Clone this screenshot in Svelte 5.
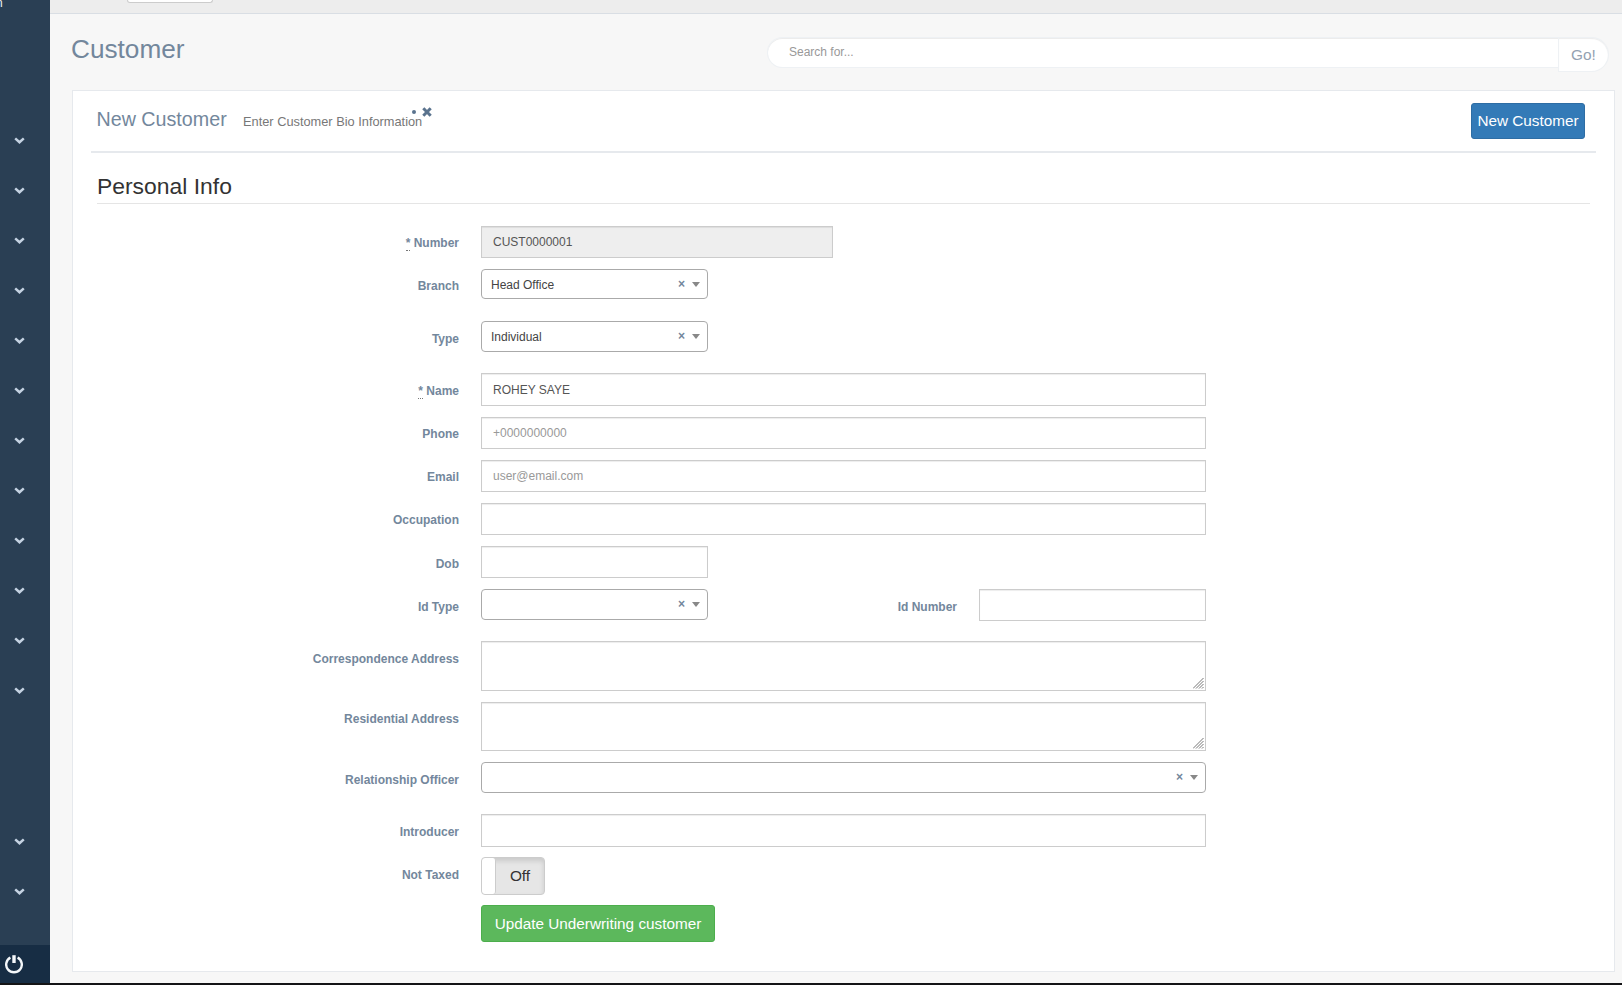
<script>
	// height / gap are the control height and the space under the row, pad lowers the label
	const rows = [
		{ label: 'Number', required: true, type: 'text', size: 'mid', value: 'CUST0000001', readonly: true, height: 32, gap: 11, pad: 10 },
		{ label: 'Branch', type: 'select', size: 'small', value: 'Head Office', height: 30, gap: 22, pad: 10 },
		{ label: 'Type', type: 'select', size: 'small', value: 'Individual', height: 31, gap: 21, pad: 11 },
		{ label: 'Name', required: true, type: 'text', size: 'full', value: 'ROHEY SAYE', height: 33, gap: 11, pad: 11 },
		{ label: 'Phone', type: 'text', size: 'full', placeholder: '+0000000000', height: 32, gap: 11, pad: 10 },
		{ label: 'Email', type: 'text', size: 'full', placeholder: 'user@email.com', height: 32, gap: 11, pad: 10 },
		{ label: 'Occupation', type: 'text', size: 'full', height: 32, gap: 11, pad: 10 },
		{ label: 'Dob', type: 'text', size: 'small', height: 32, gap: 11, pad: 11 },
		{ label: 'Id Type', type: 'select', size: 'small', height: 31, gap: 21, pad: 11, extra: 'Id Number' },
		{ label: 'Correspondence Address', type: 'area', size: 'full', height: 50, gap: 11, pad: 11 },
		{ label: 'Residential Address', type: 'area', size: 'full', height: 49, gap: 11, pad: 10 },
		{ label: 'Relationship Officer', type: 'select', size: 'full', height: 31, gap: 21, pad: 11 },
		{ label: 'Introducer', type: 'text', size: 'full', height: 33, gap: 10, pad: 11 },
		{ label: 'Not Taxed', type: 'toggle', size: 'small', height: 38, gap: 10, pad: 11 }
	];
	const menu = Array(12);
	const lowerMenu = Array(2);

	let taxed = $state(false);
</script>

{#snippet chevron()}
	<a class="item" href="#menu" aria-label="Expand">
		<svg width="11" height="8" viewBox="0 0 11 8"><path d="M1.2 1.4 L5.5 5.3 L9.8 1.4" fill="none" stroke="#c4d2e2" stroke-width="2.5" /></svg>
	</a>
{/snippet}

<div class="page">
	<aside>
		<div class="profile">n</div>
		<nav>
			{#each menu as _}
				{@render chevron()}
			{/each}
		</nav>
		<nav class="lower">
			{#each lowerMenu as _}
				{@render chevron()}
			{/each}
		</nav>
		<div class="logout">
			<svg width="18" height="19" viewBox="0 0 18 19" fill="none" stroke="#f4f7fa">
				<path d="M5.4 2.6 A7.8 7.8 0 1 0 12.6 2.6" stroke-width="2.4" />
				<path d="M9 0.2 V8" stroke-width="3.4" />
			</svg>
		</div>
	</aside>

	<main>
		<header><div class="tab"></div></header>
		<div class="title">
			<h3>Customer</h3>
			<div class="search">
				<input type="text" placeholder="Search for..." />
				<button>Go!</button>
			</div>
		</div>

		<section class="panel">
			<div class="panel-head">
				<h2>New Customer</h2>
				<small>Enter Customer Bio Information</small>
				<div class="tools">
					<i></i>
					<svg width="10" height="10" viewBox="0 0 10 10"><path d="M1.3 1.3 L8.7 8.7 M8.7 1.3 L1.3 8.7" stroke="#5a738e" stroke-width="3" /></svg>
				</div>
				<button class="btn primary">New Customer</button>
			</div>

			<form>
				<h4>Personal Info</h4>
				{#each rows as row}
					<div class="row" style:height="{row.height}px" style:margin-bottom="{row.gap}px">
						<label for={row.label} style:padding-top="{row.pad}px">
							{#if row.required}<abbr title="required">*</abbr>{/if}
							{row.label}
						</label>
						{#if row.type == 'select'}
							<div class="select {row.size}" id={row.label}>
								<span>{row.value ?? ''}</span>
								<b>×</b>
								<em></em>
							</div>
						{:else if row.type == 'area'}
							<div class="area {row.size}">
								<textarea class="control" id={row.label}></textarea>
								<svg class="grip" width="11" height="11" viewBox="0 0 11 11">
									<path d="M0 10.5 L10.5 0 M3 10.5 L10.5 3 M6 10.5 L10.5 6 M9 10.5 L10.5 9" stroke="#777" stroke-width="1" />
								</svg>
							</div>
						{:else if row.type == 'toggle'}
							<button type="button" class="toggle" id={row.label} onclick={() => (taxed = !taxed)}>
								<i></i>
								<span>{taxed ? 'On' : 'Off'}</span>
							</button>
						{:else}
							<input class="control {row.size}" id={row.label} type="text" value={row.value ?? ''} placeholder={row.placeholder} readonly={row.readonly} />
						{/if}
						{#if row.extra}
							<label class="second" for={row.extra} style:padding-top="{row.pad}px">{row.extra}</label>
							<input class="control small extra" id={row.extra} type="text" />
						{/if}
					</div>
				{/each}
				<button type="button" class="btn success">Update Underwriting customer</button>
			</form>
		</section>
	</main>
</div>

<style>
	:global(body) {
		margin: 0;
		background: #141416;
	}
	* {
		box-sizing: border-box;
	}
	.page {
		display: flex;
		height: 983px;
		overflow: hidden;
		background: #f7f7f7;
		color: #73879c;
		font-family: "Liberation Sans", Arial, sans-serif;
		font-size: 12px;
		line-height: 14px;
	}
	input, textarea, button {
		font-family: inherit;
		margin: 0;
	}

	aside {
		display: flex;
		flex-direction: column;
		width: 50px;
		background: #2a3f54;
		overflow: hidden;
	}
	.profile {
		height: 116px;
		margin: -4px 0 0 -4px;
		color: #ecf0f1;
		flex: none;
	}
	nav {
		display: flex;
		flex-direction: column;
	}
	.lower {
		margin-top: 101px;
	}
	.item {
		display: flex;
		align-items: center;
		height: 50px;
		padding: 8px 0 0 14px;
	}
	.logout {
		margin-top: auto;
		height: 38px;
		padding: 10px 0 0 5px;
		background: #172d44;
	}

	main {
		flex: 1;
	}
	header {
		height: 14px;
		background: #ededed;
		border-bottom: 1px solid #d9dee4;
	}
	.tab {
		width: 86px;
		height: 3px;
		margin-left: 77px;
		background: #fff;
		border: 1px solid #ccc;
		border-top: 0;
		border-radius: 0 0 4px 4px;
	}
	.title {
		display: flex;
		justify-content: space-between;
		height: 76px;
		padding: 23px 13px 0 22px;
	}
	h3 {
		margin: -3px 0 0 -1px;
		font-size: 26.2px;
		line-height: 30px;
		font-weight: 400;
	}
	.search {
		display: flex;
		align-items: flex-start;
		width: 842px;
	}
	.search input {
		flex: 1;
		height: 31px;
		padding: 0 21px 2px;
		border: 1px solid rgba(221, 226, 232, 0.49);
		border-right: 0;
		border-radius: 27px 0 0 27px;
		box-shadow: inset 0 1px 0 rgba(0, 0, 0, 0.075);
		font-size: 12px;
		outline: none;
	}
	.search button {
		width: 51px;
		height: 35px;
		padding: 0;
		border: 1px solid rgba(221, 226, 232, 0.49);
		border-radius: 0 27px 27px 0;
		box-shadow: inset 0 1px 1px rgba(0, 0, 0, 0.075);
		background: #fff;
		color: #93a2b2;
		font-size: 15.4px;
	}
	::placeholder {
		color: #999;
		opacity: 1;
	}

	.panel {
		width: 1543px;
		height: 882px;
		margin-left: 22px;
		padding: 0 18px;
		background: #fff;
		border: 1px solid #e6e9ed;
	}
	.panel-head {
		display: flex;
		align-items: flex-start;
		height: 62px;
		padding: 12px 11px 0 5px;
		border-bottom: 2px solid #e6e9ed;
	}
	h2 {
		width: 131px;
		margin: 4px 0 0;
		padding-left: 0.5px;
		font-size: 19.7px;
		line-height: 24px;
		font-weight: 400;
		white-space: nowrap;
	}
	small {
		width: 179px;
		margin: 12px 0 0 16px;
		color: #777;
		font-size: 12.8px;
		white-space: nowrap;
	}
	.tools {
		display: flex;
		gap: 6px;
		margin: 4px 0 0 -10px;
	}
	.tools i {
		width: 4px;
		height: 4px;
		margin-top: 3px;
		border-radius: 2px;
		background: #5a738e;
	}
	.btn {
		border: 1px solid;
		border-radius: 3px;
		color: #fff;
		font-size: 15.3px;
	}
	.primary {
		width: 114px;
		height: 36px;
		margin-left: auto;
		padding: 0;
		background: #337ab7;
		border-color: #2e6da4;
	}
	.success {
		display: block;
		width: 234px;
		height: 37px;
		margin-left: 384px;
		padding: 0;
		background: #5cb85c;
		border-color: #4cae4c;
	}

	form {
		padding: 20px 6px 0;
	}
	h4 {
		height: 31px;
		margin: 0 0 22px;
		border-bottom: 1px solid #e5e5e5;
		color: #333;
		font-size: 22.9px;
		line-height: 27px;
		font-weight: 400;
	}
	.row {
		display: flex;
		align-items: flex-start;
	}
	label {
		width: 362px;
		margin-right: 22px;
		text-align: right;
		font-weight: 700;
		white-space: nowrap;
	}
	.second {
		width: 249px;
	}
	abbr {
		text-decoration: none;
		border-bottom: 1px dotted #777;
	}
	.control {
		height: 100%;
		padding: 0 11px;
		border: 1px solid #ccc;
		border-radius: 0;
		box-shadow: inset 0 1px 1px rgba(0, 0, 0, 0.075);
		background: #fff;
		color: #555;
		font-size: 12px;
		outline: none;
	}
	.control[readonly] {
		background: #eee;
	}
	.row .extra {
		height: 32px;
	}
	.small {
		width: 227px;
	}
	.mid {
		width: 352px;
	}
	.full {
		width: 725px;
	}
	.area {
		position: relative;
		height: 100%;
	}
	.area textarea {
		display: block;
		width: 100%;
		resize: none;
	}
	.grip {
		position: absolute;
		right: 2px;
		bottom: 2px;
	}
	.select {
		display: flex;
		height: 100%;
		padding: 8px 7px 0 9px;
		border: 1px solid #aaa;
		border-radius: 4px;
		color: #444;
	}
	.select span {
		flex: 1;
	}
	.select b {
		margin: -1px 7px 0 0;
		color: #73879c;
		font-size: 12.1px;
	}
	.select em {
		width: 0;
		height: 0;
		margin-top: 4px;
		border: 4.4px solid transparent;
		border-top: 5px solid #888;
		border-bottom: 0;
	}
	.toggle {
		display: flex;
		width: 64px;
		height: 38px;
		padding: 0;
		border: 1px solid #ccc;
		border-radius: 4px;
		background: #e6e6e6;
		box-shadow: inset 0 3px 5px rgba(0, 0, 0, 0.125);
		color: #333;
		font-size: 15.4px;
		line-height: 36px;
		overflow: hidden;
	}
	.toggle i {
		width: 14px;
		height: 36px;
		background: #fff;
		border-right: 1px solid #ccc;
		border-radius: 3px;
	}
	.toggle span {
		flex: 1;
	}
</style>
